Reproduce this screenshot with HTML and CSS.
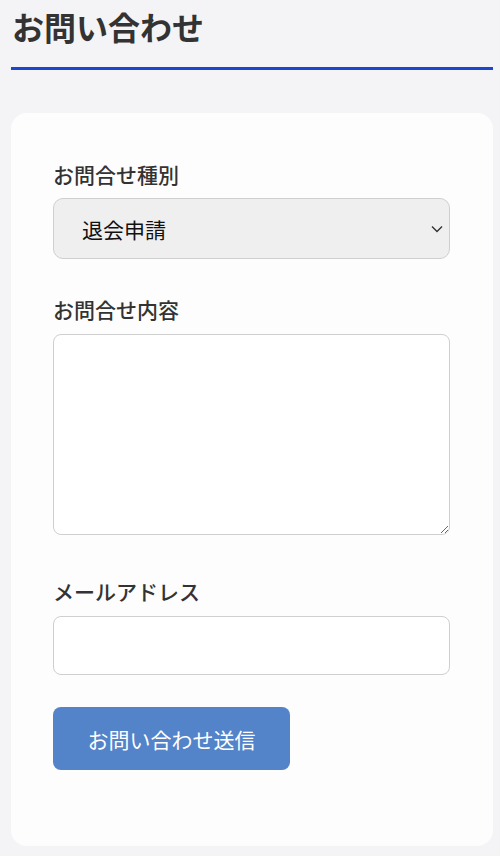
FILE: index.html
```html
<!DOCTYPE html>
<html lang="ja">
<head>
<meta charset="utf-8">
<title>お問い合わせ</title>
<link rel="stylesheet" href="styles.css">
</head>
<body>
<header class="page-head">
  <h1 class="page-title">お問い合わせ</h1>
</header>
<main class="card">
  <form class="form">
    <div class="field field-select">
      <label class="label" for="kind">お問合せ種別</label>
      <div class="select-wrap">
        <select id="kind" class="select">
          <option>退会申請</option>
        </select>
        <svg class="chevron" width="12" height="8" viewBox="0 0 12 8"><path d="M1 1.5 L6 6.5 L11 1.5" fill="none" stroke="#333" stroke-width="1.4"/></svg>
      </div>
    </div>
    <div class="field field-text">
      <label class="label" for="body">お問合せ内容</label>
      <textarea id="body" class="textarea"></textarea>
    </div>
    <div class="field field-mail">
      <label class="label" for="mail">メールアドレス</label>
      <input id="mail" class="input" type="email">
    </div>
    <button type="button" class="submit">お問い合わせ送信</button>
  </form>
</main>
</body>
</html>
```
FILE: styles.css
```css
html, body {
  margin: 0;
  padding: 0;
}
body {
  background: #f4f4f6;
  padding: 0 7px 10px 11px;
  font-family: "Noto Sans CJK JP", "Noto Sans", sans-serif;
  color: #333;
}
.page-head {
  padding: 2px 0 17px 1px;
  border-bottom: 3px solid #1b46d0;
}
.page-title {
  margin: 0;
  font-size: 32px;
  line-height: 48px;
  font-weight: 600;
  color: #333;
}
.card {
  margin-top: 43px;
  background: #fdfdfd;
  border-radius: 16px;
  padding: 46px 43px 76px 42px;
}
.form {
  display: flex;
  flex-direction: column;
}
.field {
  display: flex;
  flex-direction: column;
}
.field-select { margin-bottom: 35px; }
.field-text { margin-bottom: 41px; }
.field-mail { margin-bottom: 32px; }
.label {
  font-size: 21px;
  line-height: 30px;
  font-weight: 500;
  color: #333;
  margin-bottom: 9px;
}
.field-text .label,
.field-mail .label { margin-bottom: 10px; }
.select-wrap {
  position: relative;
}
.select {
  display: block;
  width: 100%;
  height: 61px;
  box-sizing: border-box;
  appearance: none;
  -webkit-appearance: none;
  background: #efefef;
  border: 1px solid #cfcfcf;
  border-radius: 10px;
  padding: 0 40px 0 28px;
  font-family: "Noto Sans CJK JP", "Noto Sans", sans-serif;
  font-size: 21px;
  color: #111;
}
.chevron {
  position: absolute;
  right: 7px;
  top: 27px;
}
.textarea {
  display: block;
  width: 100%;
  height: 201px;
  box-sizing: border-box;
  background: #fff;
  border: 1px solid #cfcfcf;
  border-radius: 8px;
  margin: 0;
  padding: 8px;
  font-family: "Noto Sans CJK JP", sans-serif;
  font-size: 18px;
}
.input {
  display: block;
  width: 100%;
  height: 59px;
  box-sizing: border-box;
  background: #fff;
  border: 1px solid #cfcfcf;
  border-radius: 8px;
  margin: 0;
  padding: 0 12px;
  font-size: 18px;
}
.submit {
  align-self: flex-start;
  width: 237px;
  height: 63px;
  border: none;
  border-radius: 8px;
  background: #5383c8;
  color: #fff;
  font-family: "Noto Sans CJK JP", sans-serif;
  font-size: 21px;
  font-weight: 400;
  padding: 0;
}
```
